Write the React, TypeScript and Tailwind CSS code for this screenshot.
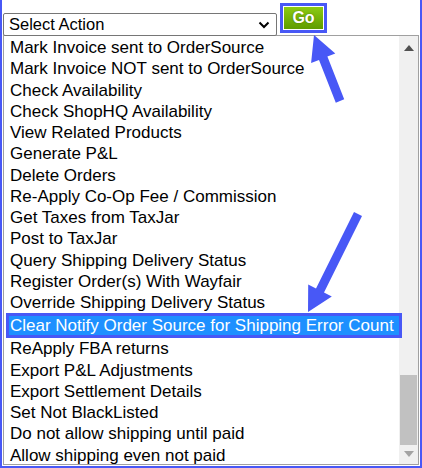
const actions = [
  "Mark Invoice sent to OrderSource",
  "Mark Invoice NOT sent to OrderSource",
  "Check Availability",
  "Check ShopHQ Availability",
  "View Related Products",
  "Generate P&L",
  "Delete Orders",
  "Re-Apply Co-Op Fee / Commission",
  "Get Taxes from TaxJar",
  "Post to TaxJar",
  "Query Shipping Delivery Status",
  "Register Order(s) With Wayfair",
  "Override Shipping Delivery Status",
  "Clear Notify Order Source for Shipping Error Count",
  "ReApply FBA returns",
  "Export P&L Adjustments",
  "Export Settlement Details",
  "Set Not BlackListed",
  "Do not allow shipping until paid",
  "Allow shipping even not paid",
]

const selected = "Clear Notify Order Source for Shipping Error Count"

const App = () => {
  return (
    <div
      className="relative h-[468px] w-[422px] overflow-hidden border-x-2 border-b-2 border-[#4858f6] bg-white text-black"
      style={{ fontFamily: '"Liberation Sans", Arial, sans-serif' }}
    >
      <div className="flex items-start pl-px">
        <div className="mt-[13px] flex h-[23px] w-[274px] items-center justify-between rounded-[2px] border border-[#767676] bg-white pl-[5px] pr-[5px] text-[16.5px] leading-none">
          <span>Select Action</span>
          <svg width="12" height="8" viewBox="0 0 12 8" className="mr-[1px]">
            <path d="M1.5 1.5 L6 6 L10.5 1.5" fill="none" stroke="#000" strokeWidth="2" />
          </svg>
        </div>
        <div className="ml-[3px] mt-[3px] border-[3px] border-[#4858f6] bg-white p-px">
          <div className="flex h-[22px] w-[39px] items-center justify-center bg-gradient-to-b from-[#8ccb12] to-[#5f9c00] text-[16px] font-bold text-white [text-shadow:0_0_2px_rgba(0,0,0,0.35)]">
            Go
          </div>
        </div>
      </div>
      <div className="-mt-px ml-px mr-px flex h-[430px] border border-[#a0a0a0]">
        <div className="flex-1 pt-px text-[17px]">
          {actions.map((a) =>
            a === selected ? (
              <div
                key={a}
                className="relative z-10 -mr-[3px] ml-[2px] flex h-[25px] items-center whitespace-nowrap border-[3px] border-[#4858f6] bg-[#1e90ff] pl-px leading-none text-white"
              >
                {a}
              </div>
            ) : (
              <div key={a} className="flex h-[21.25px] items-center whitespace-nowrap pl-[6px] leading-none">
                {a}
              </div>
            )
          )}
        </div>
        <div className="flex w-[19px] flex-col items-center bg-[#f0f0f0]">
          <svg width="10" height="6" viewBox="0 0 10 6" className="mt-[9px]">
            <path d="M0 6 L5 0 L10 6 Z" fill="#505050" />
          </svg>
          <div className="flex-1" />
          <div className="mb-[6px] h-[70px] w-[17px] bg-[#c1c1c1]" />
          <svg width="10" height="6" viewBox="0 0 10 6" className="mb-[7px]">
            <path d="M0 0 L10 0 L5 6 Z" fill="#a3a3a3" />
          </svg>
        </div>
      </div>
      <svg
        className="pointer-events-none absolute left-[-2px] top-0"
        width="422"
        height="468"
        viewBox="0 0 422 468"
      >
        <polygon
          points="314,35 335.3,53.5 327.4,56.6 344.2,99.3 335.8,102.7 319,60 311.1,63.1"
          fill="#4858f6"
        />
        <polygon
          points="308,312 331.8,296.5 324,292.5 362,216 354,212 316,288.5 308.2,284.5"
          fill="#4858f6"
        />
      </svg>
    </div>
  )
}

export default App
